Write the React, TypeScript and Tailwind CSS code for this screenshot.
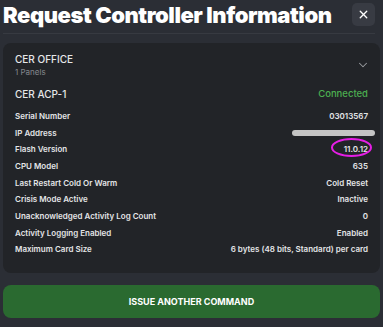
import { X, ChevronDown } from 'lucide-react';

const rows: { label: string; value: string }[] = [
  { label: 'Serial Number', value: '03013567' },
  { label: 'IP Address', value: '' },
  { label: 'Flash Version', value: '11.0.12' },
  { label: 'CPU Model', value: '635' },
  { label: 'Last Restart Cold Or Warm', value: 'Cold Reset' },
  { label: 'Crisis Mode Active', value: 'Inactive' },
  { label: 'Unacknowledged Activity Log Count', value: '0' },
  { label: 'Activity Logging Enabled', value: 'Enabled' },
  { label: 'Maximum Card Size', value: '6 bytes (48 bits, Standard) per card' },
];

export default function App() {
  return (
    <div
      className="w-[383px] h-[327px] overflow-hidden bg-[#2b2e35] px-[3px] pt-[3px] text-white"
      style={{ fontFamily: 'Inter, "Noto Sans", sans-serif' }}
    >
      {/* header */}
      <div className="flex items-center justify-between h-[23px] pr-[5px]">
        <h1 className="text-[22px] leading-none font-black tracking-[-0.45px]">
          Request Controller Information
        </h1>
        <button className="w-[23px] h-[23px] rounded-[5px] bg-[#383b43] flex items-center justify-center">
          <X className="w-[13px] h-[13px] text-white" strokeWidth={2.5} />
        </button>
      </div>
      <div className="mt-[7px] mr-[5px] h-px bg-[#373a41]" />

      {/* card */}
      <div className="mt-[9px] h-[230px] rounded-lg bg-[#222428] px-3 pt-[9px]">
        <div className="flex items-center justify-between">
          <div>
            <div className="text-[10px] leading-[14px] font-medium text-[#e6e7e9]">CER OFFICE</div>
            <div className="text-[8px] leading-[12px] text-[#85888e]">1 Panels</div>
          </div>
          <ChevronDown className="w-[14px] h-[14px] -mr-[2px] text-[#9a9ca1]" strokeWidth={1.75} />
        </div>

        <div className="mt-[6px] h-[20px] flex items-center justify-between">
          <span className="text-[10px] font-medium text-[#e6e7e9]">CER ACP-1</span>
          <span className="text-[9.5px] font-medium text-[#4caf50]">Connected</span>
        </div>

        <div className="mt-[3.67px]">
          {rows.map((r) => (
            <div key={r.label} className="h-[16.67px] flex items-center justify-between text-[8px] font-semibold text-[#e4e5e7]">
              <span>{r.label}</span>
              {r.label === 'IP Address' ? (
                <span className="w-[83px] h-[6px] -mr-[7px] rounded-full bg-[#c4c4c4] blur-[0.4px]" />
              ) : r.label === 'Flash Version' ? (
                <span className="relative">
                  {r.value}
                  <span className="absolute left-[-13px] top-[-5px] w-[41px] h-[19px] rounded-[50%] border-2 border-[#e61ee6]" />
                </span>
              ) : (
                <span>{r.value}</span>
              )}
            </div>
          ))}
        </div>
      </div>

      {/* action */}
      <button className="mt-[12px] w-full h-[33px] rounded-lg bg-[#2a6a30] text-[9px] font-bold text-white">
        ISSUE ANOTHER COMMAND
      </button>
    </div>
  );
}
